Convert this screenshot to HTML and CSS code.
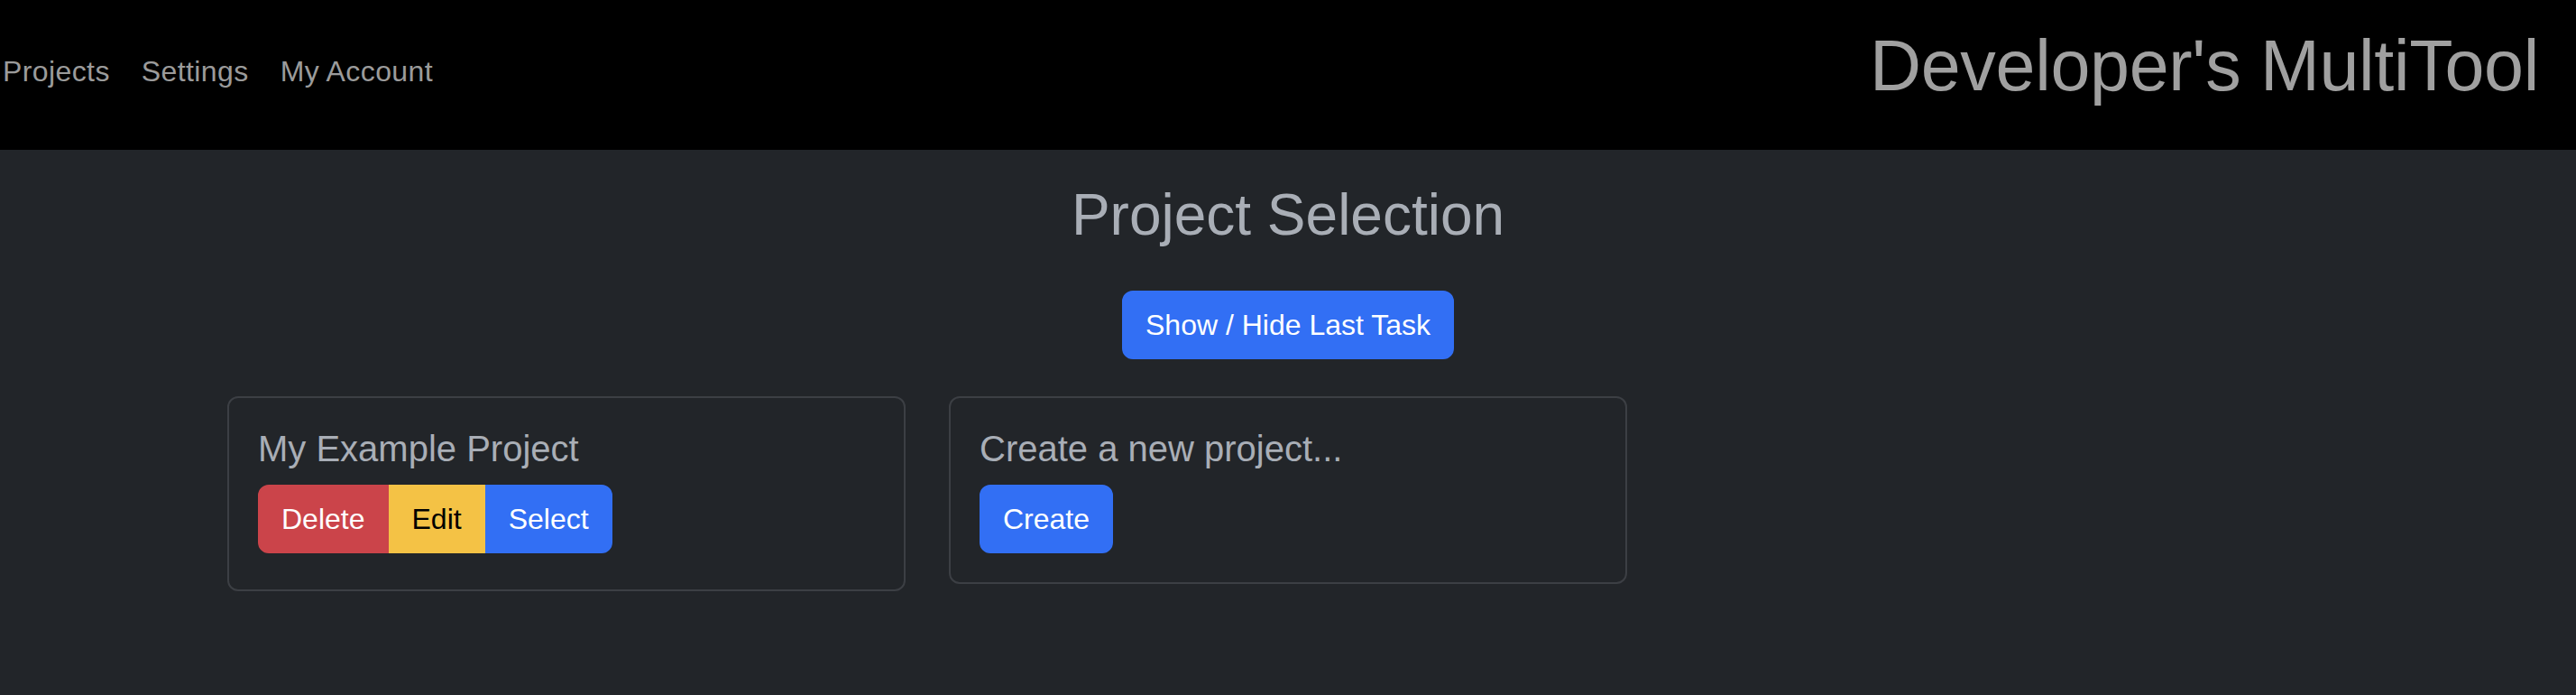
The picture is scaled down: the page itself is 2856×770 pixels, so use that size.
FILE: index.html
```html
<!DOCTYPE html>
<html lang="en">
<head>
<meta charset="utf-8">
<title>Developer's MultiTool</title>
<link rel="stylesheet" href="styles.css">
</head>
<body>
<header class="topbar">
  <nav class="nav">
    <a class="nav-link" href="#">Projects</a>
    <a class="nav-link" href="#">Settings</a>
    <a class="nav-link" href="#">My Account</a>
  </nav>
  <h1 class="brand">Developer's MultiTool</h1>
</header>
<main class="main">
  <h2 class="page-title">Project Selection</h2>
  <div class="toggle-row">
    <button class="btn btn-primary" type="button">Show / Hide Last Task</button>
  </div>
  <div class="cards">
    <div class="card card-project">
      <h5 class="card-title">My Example Project</h5>
      <div class="btn-group">
        <button class="btn btn-danger" type="button">Delete</button>
        <button class="btn btn-warning" type="button">Edit</button>
        <button class="btn btn-primary" type="button">Select</button>
      </div>
    </div>
    <div class="card">
      <h5 class="card-title">Create a new project...</h5>
      <div class="btn-group">
        <button class="btn btn-primary" type="button">Create</button>
      </div>
    </div>
  </div>
</main>
</body>
</html>
```

FILE: styles.css
```css
html {
  background: #222529;
}
* {
  box-sizing: border-box;
}
body {
  margin: 0;
  font-family: "Liberation Sans", Arial, sans-serif;
  font-size: 32px;
  line-height: 48px;
  color: #a9aeb6;
  background: #222529;
}
.topbar {
  height: 166px;
  background: #000;
  display: flex;
  justify-content: space-between;
  align-items: flex-start;
  padding: 0 41px 0 3px;
}
.nav {
  display: flex;
  gap: 35px;
  padding-top: 55px;
}
.nav-link {
  color: #9b9b9b;
  text-decoration: none;
  font-size: 32px;
  line-height: 48px;
  letter-spacing: 0.4px;
}
.brand {
  margin: 25px 0 0;
  font-size: 79px;
  line-height: 96px;
  font-weight: 400;
  letter-spacing: -0.3px;
  color: #a0a0a0;
}
.main {
  display: flex;
  flex-direction: column;
}
.page-title {
  margin: 34px 0 0;
  text-align: center;
  font-size: 64px;
  line-height: 77px;
  font-weight: 400;
  color: #a9aeb6;
}
.toggle-row {
  display: flex;
  justify-content: center;
  margin-top: 45px;
}
.btn {
  font-family: inherit;
  font-size: 32px;
  line-height: 48px;
  padding: 12px 24px;
  border: 2px solid transparent;
  border-radius: 12px;
  color: #fff;
  cursor: pointer;
}
.btn-primary {
  background: #326ff4;
  border-color: #326ff4;
}
.btn-danger {
  background: #cb444a;
  border-color: #cb444a;
}
.btn-warning {
  background: #f4c245;
  border-color: #f4c245;
  color: #000;
}
.cards {
  display: flex;
  gap: 48px;
  padding-left: 252px;
  margin-top: 41px;
  align-items: flex-start;
}
.card {
  width: 752px;
  border: 2px solid #3c3f44;
  border-radius: 12px;
  padding: 32px;
}
.card-project {
  padding-bottom: 40px;
}
.card-title {
  margin: 0 0 16px;
  font-size: 40px;
  line-height: 48px;
  font-weight: 400;
  color: #a9aeb6;
}
.btn-group {
  display: flex;
}
.btn-group .btn {
  border-radius: 0;
}
.btn-group .btn:first-child {
  border-top-left-radius: 12px;
  border-bottom-left-radius: 12px;
}
.btn-group .btn:last-child {
  border-top-right-radius: 12px;
  border-bottom-right-radius: 12px;
}
```
